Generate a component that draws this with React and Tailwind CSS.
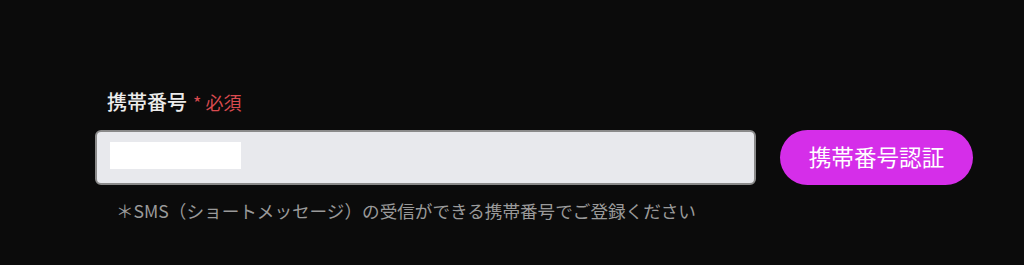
import React, { useState } from 'react';

const font = { fontFamily: '"Noto Sans CJK JP", "Noto Sans", sans-serif' };

const App = () => {
  const [phone, setPhone] = useState('');

  return (
    <div className="w-[1024px] h-[265px] bg-[#0b0b0b]" style={font}>
      <div className="pl-[95px] pt-[87px]">
        {/* Label */}
        <div className="flex items-center gap-[6px] pl-3 h-[30px]">
          <span className="text-[20px] font-medium text-[#ececec]">携帯番号</span>
          <span className="text-[18px] text-[#d84a4f]">* 必須</span>
        </div>

        {/* Input + button */}
        <div className="flex items-center gap-6 mt-[13px]">
          <div className="relative w-[661px] h-[55px] rounded-md border-2 border-[#8a8a8a] bg-[#e8e9ed]">
            <input
              type="tel"
              value={phone}
              onChange={(e) => setPhone(e.target.value)}
              className="absolute left-[13px] top-[10px] w-[131px] h-[27px] bg-white outline-none px-2 text-[16px]"
            />
          </div>
          <button className="w-[193px] h-[55px] rounded-full bg-[#d52ee9] text-white text-[22.6px] leading-none">
            携帯番号認証
          </button>
        </div>

        {/* Help */}
        <p className="mt-[13px] pl-[21px] text-[17.6px] text-[#9a9a9a] leading-[26px]">
          ＊SMS（ショートメッセージ）の受信ができる携帯番号でご登録ください
        </p>
      </div>
    </div>
  );
};

export default App;
